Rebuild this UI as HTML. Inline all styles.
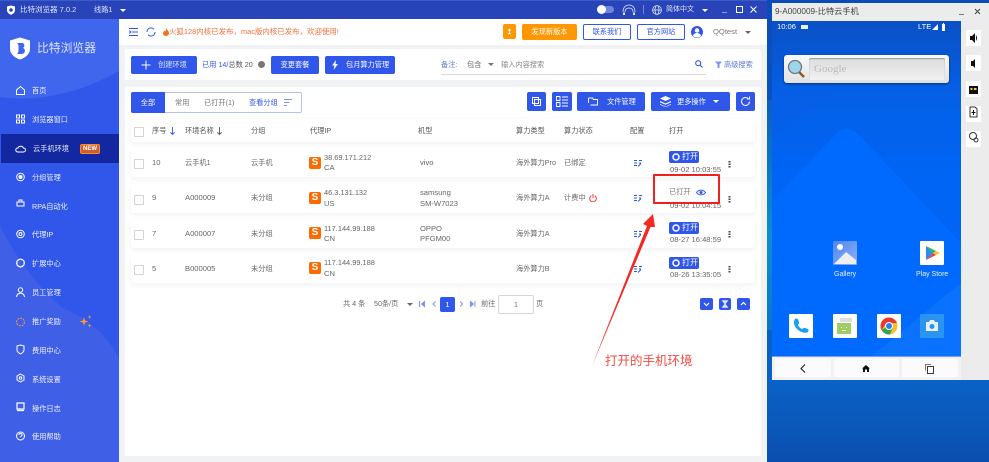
<!DOCTYPE html>
<html lang="zh-CN"><head><meta charset="utf-8"><title>比特浏览器</title>
<style>
html,body{margin:0;padding:0;width:989px;height:462px;overflow:hidden;background:#0a56b8}
body{font-family:"Liberation Sans","Noto Sans CJK SC",sans-serif;font-size:7.2px;color:#666;position:relative}
#r{position:absolute;left:0;top:0;width:989px;height:462px;overflow:hidden;filter:blur(.3px)}
#r div,#r span,#r svg{position:absolute}
.t{white-space:nowrap;line-height:10px;height:10px}
.l{font-size:7.6px}
.m{color:#fff;left:32px;opacity:.92}
.b{background:#3056ea;border-radius:2px;color:#fff;text-align:center;line-height:18px}
.o{background:#fff;border:1px solid #3056ea;border-radius:2px;color:#3056ea;text-align:center;line-height:14px;box-sizing:border-box}
.h{color:#555;top:126px}
.row{left:131px;width:624px;background:#fff;box-shadow:0 2px 5px rgba(40,50,90,.07);border-radius:3px}
.cb{left:134px;width:8px;height:8px;border:1px solid #d4d4d4;background:#fff;border-radius:1px}
.s{left:309px;width:12px;height:12px;background:#ff6a00;border-radius:2px;color:#fff;font-weight:bold;font-size:10px;line-height:12px;text-align:center}
.op{left:669px;width:30px;height:12px;background:#3056ea;border-radius:2px;color:#fff;line-height:12px}
.side{left:966px;width:15px;height:16px;background:#fff;border-radius:1px}
.app{width:24px;height:24px;background:#fff;border-radius:1px}
.nb{background:#fbfbfb;border-radius:2px;top:359px;height:18px}
</style></head><body><div id="r">

<!-- desktop strip -->
<div style="left:767px;top:0;width:222px;height:462px;background:linear-gradient(180deg,#0b4cb8 0,#0a62c6 380px,#0a4fb0 462px)"></div>
<div style="left:767px;top:100px;width:5px;height:230px;background:linear-gradient(180deg,#0b60c0,#0d8ed0 60%,#0d74c8)"></div>

<!-- title bar -->
<div style="left:0;top:0;width:767px;height:19px;background:#2844b8"></div>
<div style="left:0;top:0;width:767px;height:1px;background:#3a5cc8"></div>
<svg style="left:6px;top:5px" width="10" height="10" viewBox="0 0 10 10"><path d="M1 1.500 5 .5 9 1.500V5.500C9 7.500 7 9 5 9.800 3 9 1 7.500 1 5.500Z" fill="#fff"/><circle cx="5" cy="5" r="1.800" fill="#2844b8"/></svg>
<span class="t" style="left:20px;top:5px;color:#dfe5fa;font-size:7.500px">比特浏览器 7.0.2</span>
<span class="t" style="left:94px;top:5px;color:#dfe5fa">线路1</span>
<div style="left:120px;top:9px;border:3px solid transparent;border-top:3px solid #fff;width:0;height:0"></div>
<div style="left:597px;top:6px;width:17px;height:7px;background:#6f86dc;border-radius:4px"></div>
<div style="left:597px;top:5px;width:9px;height:9px;background:#fff;border-radius:50%"></div>
<svg style="left:622px;top:4px" width="14" height="12" viewBox="0 0 14 12"><path d="M1 8C1 3 4 1 7 1s6 2 6 7M3 8c0-3 2-4 4-4s4 1 4 4" fill="none" stroke="#dfe5fa" stroke-width=".8"/><path d="M1 8.500h2V11H1zM11 8.500h2V11h-2z" fill="#dfe5fa"/></svg>
<div style="left:643px;top:5px;width:1px;height:9px;background:#6f86dc"></div>
<svg style="left:652px;top:5px" width="10" height="10" viewBox="0 0 10 10" fill="none" stroke="#dfe5fa" stroke-width=".8"><circle cx="5" cy="5" r="4.400"/><ellipse cx="5" cy="5" rx="2" ry="4.400"/><path d="M.6 5h8.800"/></svg>
<span class="t" style="left:666px;top:5px;color:#dfe5fa;font-size:7px">简体中文</span>
<div style="left:702px;top:9px;border:3px solid transparent;border-top:3px solid #fff;width:0;height:0"></div>
<div style="left:722px;top:12px;width:5px;height:1px;background:#8ea0e4"></div>
<div style="left:736px;top:6px;width:5px;height:5px;border:1px solid #fff;box-sizing:content-box"></div>
<svg style="left:750px;top:6px" width="7" height="7" viewBox="0 0 7 7"><path d="M.5.5l6 6M6.500.5l-6 6" stroke="#fff" stroke-width="1"/></svg>

<!-- sidebar -->
<svg style="left:0;top:19px" width="119" height="443" viewBox="0 0 119 443"><rect width="119" height="443" fill="#3056ea"/><path d="M0 0H119V52C85 72 40 84 0 78Z" fill="#3f66ec"/><path d="M0 207C20 245 40 270 63 289 90 300 110 320 119 339V443H0Z" fill="#3e5fe6"/></svg>
<svg style="left:9px;top:37px" width="22" height="23" viewBox="0 0 22 23"><path d="M1 3.500 11 .5l10 3V12c0 5-5 9-10 10.500C6 21 1 17 1 12Z" fill="#fff"/><path d="M8 6h5c3 0 3 4 1 5 3 1 2.500 6-1.500 6H8c1-1 1.500-2 1.500-3V9C9.500 8 9 7 8 6Z" fill="#3f66ec"/></svg>
<span class="t" style="left:37px;top:42px;color:#dbe3fb;font-size:11.800px;line-height:13px;height:13px">比特浏览器</span>

<div style="left:1px;top:134px;width:118px;height:29px;background:#1327a0"></div>
<span class="t m" style="top:86px">首页</span>
<span class="t m" style="top:115px">浏览器窗口</span>
<span class="t m" style="top:144px;left:33px">云手机环境</span>
<div style="left:80px;top:144px;width:18px;height:8px;border:1px solid #ff8a1e;border-radius:2px;background:#c8613a;color:#fff;font-size:6px;line-height:8px;text-align:center;font-weight:bold">NEW</div>
<span class="t m" style="top:173px">分组管理</span>
<span class="t m" style="top:202px">RPA自动化</span>
<span class="t m" style="top:230px">代理IP</span>
<span class="t m" style="top:259px">扩展中心</span>
<span class="t m" style="top:288px">员工管理</span>
<span class="t m" style="top:317px">推广奖励</span>
<span class="t m" style="top:346px">费用中心</span>
<span class="t m" style="top:375px">系统设置</span>
<span class="t m" style="top:404px">操作日志</span>
<span class="t m" style="top:432px">使用帮助</span>
<svg style="left:15px;top:85px" width="11" height="360" viewBox="0 0 11 360" fill="none" stroke="#fff" stroke-width="1">
<path d="M1.500 5 5.500 1.500 9.500 5V9.500H1.500Z"/>
<path d="M1.500 30h3v3h-3zM6.500 30h3v3h-3zM1.500 35h3v3h-3zM6.500 35h3v3h-3z"/>
<path d="M2.500 67a2 2 0 0 1 .5-4 3 3 0 0 1 5.500 0 2 2 0 0 1 0 4Z"/>
<circle cx="5.500" cy="92" r="3.800"/><circle cx="5.500" cy="92" r="1.500" fill="#fff"/>
<path d="M2 117h7v4H2zM4 117v-2h3v2"/>
<circle cx="5.500" cy="149" r="3.800"/><circle cx="5.500" cy="149" r="1.500"/>
<path d="M5.500 174l3.500 2v4l-3.500 2-3.500-2v-4Z"/><circle cx="5.500" cy="178" r="3.900"/>
<circle cx="5.500" cy="205" r="2.200"/><path d="M1.500 212c0-5 8-5 8 0"/>
<circle cx="5.500" cy="237" r="3.900" stroke="#ff9a3c" stroke-dasharray="2 1"/>
<path d="M2 261l3.500-1 3.500 1v4c0 2-2 3-3.500 4-1.500-1-3.500-2-3.500-4Z"/>
<path d="M5.500 289l3.500 2v4l-3.500 2-3.500-2v-4Z"/><circle cx="5.500" cy="293" r="1.300"/>
<path d="M2 318h7v6H2zM2 325.500h7" stroke-width="1.200"/>
<circle cx="5.500" cy="351" r="4"/><path d="M4 350c0-2 3-2 3 0 0 1-1.500 1-1.500 2.300"/>
</svg>
<svg style="left:79px;top:315px" width="13" height="13" viewBox="0 0 13 13" fill="#ff9a2c"><path d="M5 2 6 5.500 9.500 6.500 6 7.500 5 11 4 7.500 .5 6.500 4 5.500Z"/><path d="M10.500 0l.5 1.500 1.500.5-1.500.5-.5 1.500-.5-1.500L8.500 2 10 1.500ZM10.500 8.500l.5 1.500 1.500.5-1.500.5-.5 1.500-.5-1.500-1.500-.5 1.500-.5Z"/></svg>

<!-- content bg -->
<div style="left:119px;top:19px;width:648px;height:443px;background:#f1f2f4"></div>
<div style="left:119px;top:19px;width:648px;height:26px;background:#fff"></div>
<svg style="left:129px;top:27px" width="10" height="10" viewBox="0 0 10 10" stroke="#3056ea" stroke-width="1" fill="none"><path d="M0 1.500h9M3 5h6M0 8.500h9M0 3.500 2 5 0 6.500"/></svg>
<svg style="left:146px;top:27px" width="10" height="10" viewBox="0 0 10 10" stroke="#3056ea" stroke-width="1" fill="none"><path d="M1 5a4 4 0 0 1 7-2.700M9 5a4 4 0 0 1-7 2.700"/></svg>
<svg style="left:163px;top:28px" width="6" height="8" viewBox="0 0 6 8"><path d="M3 0C4 2 6 3 6 5.300 6 7 4.500 8 3 8S0 7 0 5.300C0 4 1 3.500 1.300 2.500 2 3 2.300 3.300 2.500 3.500 3 2.500 3 1 3 0Z" fill="#f07020"/></svg>
<span class="t" style="left:169px;top:27px;color:#f0703a;font-size:7.450px">火狐128内核已发布，mac版内核已发布，欢迎使用!</span>
<div style="left:503px;top:24px;width:13px;height:15px;background:#ff9800;border-radius:2px;color:#fff;text-align:center;line-height:15px;font-weight:bold">↥</div>
<div style="left:522px;top:24px;width:55px;height:16px;background:#ff9800;border-radius:2px;color:#fff;text-align:center;line-height:16px">发现新版本</div>
<div class="o" style="left:583px;top:24px;width:48px;height:16px">联系我们</div>
<div class="o" style="left:637px;top:24px;width:48px;height:16px">官方网站</div>
<svg style="left:691px;top:26px" width="12" height="12" viewBox="0 0 12 12"><circle cx="6" cy="6" r="6" fill="#3056ea"/><circle cx="6" cy="4.500" r="2.200" fill="#fff"/><path d="M2 10c.5-4 7.500-4 8 0-2 2-6 2-8 0Z" fill="#fff"/></svg>
<span class="t l" style="left:713px;top:27px;color:#777">QQtest</span>
<div style="left:745px;top:31px;border:3px solid transparent;border-top:3px solid #666;width:0;height:0"></div>

<!-- toolbar card -->
<div style="left:125px;top:49px;width:636px;height:31px;background:#fff;border-radius:2px"></div>
<div class="b" style="left:131px;top:56px;width:66px;height:18px"><span class="t" style="left:27px;top:4px;color:#dfe5fa">创建环境</span></div>
<svg style="left:141px;top:60px" width="10" height="10" viewBox="0 0 10 10"><path d="M5 .5v9M.5 5h9" stroke="#fff" stroke-width="1"/></svg>
<span class="t" style="left:202px;top:60px;color:#3056ea">已用 14/<span style="position:static;color:#556">总数 20</span></span>
<div style="left:258px;top:61px;width:7px;height:7px;background:#777;border-radius:50%"></div>
<div class="b" style="left:271px;top:56px;width:48px;height:18px">变更套餐</div>
<div class="b" style="left:325px;top:56px;width:70px;height:18px"><span class="t" style="left:21px;top:4px;color:#fff">包月算力管理</span></div>
<svg style="left:332px;top:60px" width="6" height="10" viewBox="0 0 6 10"><path d="M4 0 0 5.500H2.500L1.500 10 6 4H3.500Z" fill="#fff"/></svg>
<span class="t" style="left:441px;top:60px;color:#5a78d8">备注:</span>
<span class="t" style="left:467px;top:60px">包含</span>
<div style="left:488px;top:63px;border:3px solid transparent;border-top:3px solid #777;width:0;height:0"></div>
<span class="t" style="left:501px;top:60px;color:#888">输入内容搜索</span>
<svg style="left:695px;top:60px" width="8" height="8" viewBox="0 0 8 8" fill="none" stroke="#3056ea" stroke-width="1.100"><circle cx="3.200" cy="3.200" r="2.500"/><path d="M5 5l2.500 2.500"/></svg>
<div style="left:441px;top:74px;width:265px;height:1px;background:#d8d8d8"></div>
<svg style="left:715px;top:61px" width="7" height="7" viewBox="0 0 7 7"><path d="M0 .5h7L4.500 3.500V7H2.500V3.500Z" fill="#7f96ee"/></svg>
<span class="t" style="left:724px;top:60px;color:#5a78d8">高级搜索</span>

<!-- table card -->
<div style="left:125px;top:87px;width:636px;height:369px;background:#fff;border-radius:2px"></div>
<div style="left:131px;top:92px;width:171px;height:21px;border:1px solid #b4c2f4;border-radius:2px;box-sizing:border-box"></div>
<div style="left:131px;top:92px;width:34px;height:21px;background:#3056ea;border-radius:2px 0 0 2px;color:#fff;text-align:center;line-height:21px">全部</div>
<span class="t" style="left:175px;top:98px;color:#777">常用</span>
<span class="t" style="left:204px;top:98px;color:#777">已打开(1)</span>
<span class="t" style="left:249px;top:98px;color:#3056ea">查看分组</span>
<svg style="left:284px;top:99px" width="8" height="7" viewBox="0 0 8 7" stroke="#7f96ee" stroke-width="1"><path d="M0 .5h8M0 3.500h5.500M0 6.500h3"/></svg>

<div class="b" style="left:527px;top:92px;width:19px;height:19px"></div>
<svg style="left:531px;top:97px" width="11" height="9" viewBox="0 0 11 9" fill="none" stroke="#fff"><path d="M1.500.5h6v6h-6zM3.500 2.500h6v6h-6z"/></svg>
<div class="b" style="left:552px;top:92px;width:20px;height:19px"></div>
<svg style="left:556px;top:96px" width="12" height="11" viewBox="0 0 12 11" fill="none" stroke="#fff" stroke-width=".9"><path d="M.5.500h3.500v4H.5zM.5 6.500h3.500v4H.5zM6 1h6M6 4h6M6 7h6M6 10h6"/></svg>
<div class="b" style="left:577px;top:92px;width:68px;height:19px"><span class="t" style="left:30px;top:5px;color:#fff">文件管理</span></div>
<svg style="left:588px;top:97px" width="10" height="9" viewBox="0 0 10 9" fill="none" stroke="#fff" stroke-width=".9"><path d="M.5 1h4l1 1.500h4V8H2.500"/><path d="M.5 1v5"/></svg>
<div class="b" style="left:651px;top:92px;width:79px;height:19px"><span class="t" style="left:26px;top:5px;color:#fff">更多操作</span></div>
<svg style="left:660px;top:96px" width="11" height="11" viewBox="0 0 11 11" fill="#fff"><path d="M5.500 0 11 2.500 5.500 5 0 2.500ZM0 5l5.500 2.500L11 5v1.300L5.500 8.800 0 6.300ZM0 8l5.500 2.500L11 8v.800L5.500 11 0 8.800Z"/></svg>
<div style="left:713px;top:100px;border:3px solid transparent;border-top:3px solid #fff;width:0;height:0"></div>
<div class="b" style="left:736px;top:92px;width:19px;height:19px"></div>
<svg style="left:740px;top:96px" width="11" height="11" viewBox="0 0 11 11" fill="none" stroke="#fff" stroke-width="1"><path d="M9.500 5.500a4 4 0 1 1-1.200-2.900"/><path d="M9.500 .5v2.500H7"/></svg>

<!-- table head -->
<div class="row" style="top:119px;height:23px"></div>
<div class="cb" style="top:127px"></div>
<span class="t h" style="left:152px">序号</span>
<svg style="left:170px;top:127px" width="5" height="8" viewBox="0 0 5 8" fill="none" stroke="#3056ea" stroke-width=".9"><path d="M2.500 0v7.500M.3 5.300l2.200 2.200 2.200-2.200"/></svg>
<span class="t h" style="left:185px">环境名称</span>
<svg style="left:217px;top:127px" width="5" height="8" viewBox="0 0 5 8" fill="none" stroke="#555" stroke-width=".9"><path d="M2.500 0v7.500M.3 5.300l2.200 2.200 2.200-2.200"/></svg>
<span class="t h" style="left:251px">分组</span>
<span class="t h" style="left:310px">代理IP</span>
<span class="t h" style="left:418px">机型</span>
<span class="t h" style="left:516px">算力类型</span>
<span class="t h" style="left:564px">算力状态</span>
<span class="t h" style="left:630px">配置</span>
<span class="t h" style="left:669px">打开</span>

<!-- rows -->
<div class="row" style="top:148px;height:29px"></div>
<div class="row" style="top:184px;height:29px"></div>
<div class="row" style="top:220px;height:28px"></div>
<div class="row" style="top:255px;height:28px"></div>

<div class="cb" style="top:159px"></div><span class="t l" style="left:152px;top:158px">10</span><span class="t" style="left:185px;top:158px">云手机1</span><span class="t" style="left:251px;top:158px">云手机</span>
<div class="s" style="top:157px">S</div><span class="t l" style="left:324px;top:153px;font-size:7.400px">38.69.171.212</span><span class="t l" style="left:324px;top:163px">CA</span>
<span class="t l" style="left:420px;top:158px">vivo</span><span class="t" style="left:516px;top:158px">海外算力Pro</span><span class="t" style="left:564px;top:158px">已绑定</span>

<div class="cb" style="top:195px"></div><span class="t l" style="left:152px;top:193px">9</span><span class="t l" style="left:185px;top:193px">A000009</span><span class="t" style="left:251px;top:193px">未分组</span>
<div class="s" style="top:192px">S</div><span class="t l" style="left:324px;top:188px;font-size:7.400px">46.3.131.132</span><span class="t l" style="left:324px;top:199px">US</span>
<span class="t l" style="left:420px;top:188px">samsung</span><span class="t l" style="left:420px;top:199px">SM-W7023</span><span class="t" style="left:516px;top:193px">海外算力A</span><span class="t" style="left:564px;top:193px">计费中</span>
<svg style="left:589px;top:194px" width="8" height="8" viewBox="0 0 8 8" fill="none" stroke="#f04040" stroke-width="1"><path d="M2.300 1.700a3.300 3.300 0 1 0 3.400 0M4 0v4"/></svg>

<div class="cb" style="top:230px"></div><span class="t l" style="left:152px;top:229px">7</span><span class="t l" style="left:185px;top:229px">A000007</span><span class="t" style="left:251px;top:229px">未分组</span>
<div class="s" style="top:227px">S</div><span class="t l" style="left:324px;top:224px;font-size:7.400px">117.144.99.188</span><span class="t l" style="left:324px;top:234px">CN</span>
<span class="t l" style="left:420px;top:224px">OPPO</span><span class="t l" style="left:420px;top:234px">PFGM00</span><span class="t" style="left:516px;top:229px">海外算力A</span>

<div class="cb" style="top:265px"></div><span class="t l" style="left:152px;top:264px">5</span><span class="t l" style="left:185px;top:264px">B000005</span><span class="t" style="left:251px;top:264px">未分组</span>
<div class="s" style="top:262px">S</div><span class="t l" style="left:324px;top:258px;font-size:7.400px">117.144.99.188</span><span class="t l" style="left:324px;top:269px">CN</span>
<span class="t" style="left:516px;top:264px">海外算力B</span>

<!-- config icons -->
<svg style="left:634px;top:160px" width="8" height="115" viewBox="0 0 8 115" stroke="#3056ea" stroke-width="1" fill="none"><path d="M0 .5h3M0 3h3M0 5.500h3M5 .5h3M5 3h2M4 6.500l3-3"/><path transform="translate(0,35)" d="M0 .5h3M0 3h3M0 5.500h3M5 .5h3M5 3h2M4 6.500l3-3"/><path transform="translate(0,71)" d="M0 .5h3M0 3h3M0 5.500h3M5 .5h3M5 3h2M4 6.500l3-3"/><path transform="translate(0,106)" d="M0 .5h3M0 3h3M0 5.500h3M5 .5h3M5 3h2M4 6.500l3-3"/></svg>

<!-- open -->
<div class="op" style="top:151px"><span class="t" style="left:13px;top:1px;color:#fff;font-size:8px">打开</span></div>
<div class="op" style="top:222px"><span class="t" style="left:13px;top:1px;color:#fff;font-size:8px">打开</span></div>
<div class="op" style="top:257px"><span class="t" style="left:13px;top:1px;color:#fff;font-size:8px">打开</span></div>
<svg style="left:672px;top:153px" width="8" height="8" viewBox="0 0 8 8"><circle cx="4" cy="4" r="3" fill="none" stroke="#fff" stroke-width="1.500"/></svg>
<svg style="left:672px;top:224px" width="8" height="8" viewBox="0 0 8 8"><circle cx="4" cy="4" r="3" fill="none" stroke="#fff" stroke-width="1.500"/></svg>
<svg style="left:672px;top:259px" width="8" height="8" viewBox="0 0 8 8"><circle cx="4" cy="4" r="3" fill="none" stroke="#fff" stroke-width="1.500"/></svg>
<span class="t l" style="left:670px;top:165px">09-02 10:03:55</span>
<span class="t l" style="left:670px;top:201px">09-02 10:04:15</span>
<span class="t l" style="left:670px;top:235px">08-27 16:48:59</span>
<span class="t l" style="left:670px;top:270px">08-26 13:35:05</span>
<span class="t" style="left:669px;top:187px;color:#777">已打开</span>
<svg style="left:696px;top:189px" width="10" height="7" viewBox="0 0 10 7"><path d="M.5 3.500C3 .3 7 .3 9.500 3.500 7 6.700 3 6.700.5 3.500Z" fill="none" stroke="#3056ea"/><circle cx="5" cy="3.500" r="1.500" fill="#3056ea"/></svg>
<svg style="left:728px;top:161px" width="3" height="118" viewBox="0 0 3 118" fill="#444"><path d="M.5 0h2v1.500h-2zM.5 2.500h2V4h-2zM.5 5h2v1.500h-2zM.5 35h2v1.500h-2zM.5 37.500h2V39h-2zM.5 40h2v1.500h-2zM.5 70h2v1.500h-2zM.5 72.500h2V74h-2zM.5 75h2v1.500h-2zM.5 105h2v1.500h-2zM.5 107.500h2V109h-2zM.5 110h2v1.500h-2z"/></svg>

<!-- pagination -->
<span class="t" style="left:343px;top:299px">共 4 条</span>
<span class="t" style="left:374px;top:299px">50条/页</span>
<div style="left:407px;top:303px;border:3px solid transparent;border-top:3px solid #666;width:0;height:0"></div>
<svg style="left:419px;top:300px" width="60" height="8" viewBox="0 0 60 8" fill="none" stroke="#7f96ee" stroke-width="1"><path d="M.5 1v6M5.500 1.500 2.500 4l3 2.500Z" fill="#7f96ee"/><path d="M16.500 1.500 14 4 16.500 6.500"/><path d="M41 1.500 43.500 4 41 6.500"/><path d="M51.500 1.500 54.500 4l-3 2.500ZM56 1v6" fill="#7f96ee"/></svg>
<div class="b" style="left:440px;top:297px;width:15px;height:15px;line-height:15px;font-size:7.600px">1</div>
<span class="t" style="left:481px;top:299px">前往</span>
<div style="left:498px;top:295px;width:36px;height:19px;border:1px solid #d6d6d6;border-radius:2px;box-sizing:border-box;text-align:center;line-height:17px;color:#777;font-size:7.600px">1</div>
<span class="t" style="left:536px;top:299px">页</span>
<div class="b" style="left:700px;top:298px;width:13px;height:12px"></div>
<div class="b" style="left:719px;top:298px;width:12px;height:12px"></div>
<div class="b" style="left:737px;top:298px;width:13px;height:12px"></div>
<svg style="left:700px;top:298px" width="50" height="12" viewBox="0 0 50 12" fill="none" stroke="#fff" stroke-width="1.200"><path d="M4 5l2.500 2.500L9 5"/><path d="M23 3h4l-2 2.500ZM23 9h4l-2-2.500Z"/><path d="M41 7l2.500-2.500L46 7"/></svg>

<!-- annotations -->
<div style="left:653px;top:174px;width:67px;height:30px;border:2px solid #f02020;box-sizing:border-box;border-radius:1px"></div>
<svg style="left:585px;top:205px" width="80" height="170" viewBox="0 0 80 170"><path d="M7 161 62 21 58 19 68 9 70 22 65.500 22Z" fill="#f42a22"/></svg>
<span class="t" style="left:605px;top:354px;color:#f44a40;font-size:12.500px;line-height:15px;height:15px">打开的手机环境</span>

<!-- phone window -->
<div style="left:772px;top:3px;width:217px;height:377px;background:#ececec"></div>
<span class="t" style="left:775px;top:6px;color:#444;font-size:8.200px;line-height:11px;height:11px">9-A000009-比特云手机</span>
<div style="left:959px;top:14px;width:5px;height:1px;background:#777"></div>
<svg style="left:974px;top:8px" width="7" height="7" viewBox="0 0 7 7"><path d="M1 1l5 5M6 1 1 6" stroke="#444" stroke-width="1"/></svg>
<svg style="left:772px;top:21px" width="189" height="335" viewBox="0 0 189 335">
<defs><linearGradient id="w" x1="0" y1="0" x2="0" y2="1"><stop offset="0" stop-color="#0a50c6"/><stop offset=".22" stop-color="#0560e6"/><stop offset=".45" stop-color="#0064f4"/><stop offset="1" stop-color="#0064f4"/></linearGradient></defs>
<rect width="189" height="335" fill="url(#w)"/>
<path d="M0 119 56 72 0 72Z" fill="#0a5ae0" opacity=".25"/>
<path d="M0 180 65 112q10-8 20 0L189 222V335H0Z" fill="#006aff"/>
<path d="M100 335 189 262V335Z" fill="#0a72ff"/>
</svg>
<span class="t l" style="left:777px;top:22px;color:#fff">10:06</span>
<div style="left:801px;top:25px;width:7px;height:4px;background:#e8f0ff"></div>
<span class="t l" style="left:918px;top:22px;color:#fff">LTE</span>
<svg style="left:932px;top:23px" width="16" height="8" viewBox="0 0 16 8" fill="#fff"><path d="M0 7 6 1v6ZM10 1h1V0h1v1h1v7h-3Z"/></svg>
<!-- search widget -->
<div style="left:784px;top:55px;width:165px;height:28px;background:linear-gradient(180deg,#fafafa,#e2e2e2);border-radius:3px;box-shadow:0 1px 2px rgba(0,20,60,.6)"></div>
<div style="left:809px;top:58px;width:136px;height:22px;background:linear-gradient(180deg,#dcdcdc,#f2f2f2);border-radius:2px;box-shadow:inset 0 1px 1px #999"></div>
<span class="t" style="left:814px;top:62px;color:#bbb;font-family:'Liberation Serif',serif;font-size:11px;line-height:14px;height:14px">Google</span>
<svg style="left:787px;top:59px" width="19" height="20" viewBox="0 0 19 20"><path d="M12 13l5 5" stroke="#8a5a30" stroke-width="2.500"/><circle cx="8" cy="8" r="6.500" fill="#9fd4ee" stroke="#777" stroke-width="1.300"/></svg>

<!-- apps -->
<div class="app" style="left:833px;top:241px;background:linear-gradient(135deg,#4e86f4,#8ab0f8)"></div>
<svg style="left:833px;top:241px" width="24" height="24" viewBox="0 0 24 24"><circle cx="7" cy="6" r="3" fill="#fff"/><path d="M1 23 13 11 23 19V23Z" fill="#eee"/></svg>
<div class="app" style="left:920px;top:241px"></div>
<svg style="left:920px;top:241px" width="24" height="24" viewBox="0 0 24 24"><path d="M6 5 13 12 6 19Z" fill="#2a8cf0"/><path d="M6 5 16 10 13 12Z" fill="#2fb45a"/><path d="M6 19 16 14 13 12Z" fill="#e8403a"/><path d="M16 10 20 12 16 14 13 12Z" fill="#fbc02d"/></svg>
<span class="t" style="left:834px;top:270px;color:#e8f0ff;font-size:7px">Gallery</span>
<span class="t" style="left:916px;top:270px;color:#e8f0ff;font-size:7px">Play Store</span>
<div class="app" style="left:789px;top:314px"></div>
<svg style="left:789px;top:314px" width="24" height="24" viewBox="0 0 24 24"><path d="M6 5c3-2 4 2 4 4 0 1-1 1-1 2 1 2 2 3 4 4 1 0 1-1 2-1 2 0 6 1 4 4-3 2-8 0-11-3-3-3-4-7-2-10Z" fill="#18a0f0"/></svg>
<div class="app" style="left:833px;top:314px"></div>
<svg style="left:833px;top:314px" width="24" height="24" viewBox="0 0 24 24"><path d="M7 4h12v4H7Z" fill="#ddd"/><path d="M4 9h14v11H4Z" fill="#a0cc64"/><path d="M8 13h1v1H8zM13 13h1v1h-1zM9 16h4v1H9z" fill="#fff"/></svg>
<div class="app" style="left:877px;top:314px"></div>
<svg style="left:877px;top:314px" width="24" height="24" viewBox="0 0 24 24"><circle cx="12" cy="12" r="8.500" fill="#fbc02d"/><path d="M12 3.500A8.500 8.500 0 0 0 4.600 16.200L9 9.500 20 9A8.500 8.500 0 0 0 12 3.500Z" fill="#e33b2e"/><path d="M4.600 16.200A8.500 8.500 0 0 0 13 20.500L16 13 9 13Z" fill="#2fa84f"/><circle cx="12" cy="12" r="4" fill="#fff"/><circle cx="12" cy="12" r="3" fill="#2a7ff0"/></svg>
<div class="app" style="left:920px;top:314px;background:#2a94f0"></div>
<svg style="left:920px;top:314px" width="24" height="24" viewBox="0 0 24 24"><path d="M6 8h3l1-2h4l1 2h3v9H6Z" fill="#e8f2fc"/><circle cx="12" cy="12.500" r="2.500" fill="#2a94f0"/></svg>

<!-- nav -->
<div style="left:772px;top:356px;width:189px;height:24px;background:#f2f2f2"></div>
<div style="left:772px;top:356px;width:189px;height:1px;background:#6ea2f8"></div>
<div class="nb" style="left:775px;width:56px"></div>
<div class="nb" style="left:834px;width:65px"></div>
<div class="nb" style="left:902px;width:56px"></div>
<svg style="left:800px;top:364px" width="6" height="9" viewBox="0 0 6 9"><path d="M5 .5 1 4.500l4 4" fill="none" stroke="#111" stroke-width="1"/></svg>
<svg style="left:862px;top:365px" width="8" height="7" viewBox="0 0 8 7"><path d="M4 0 8 3.500H7V7H5V4.500H3V7H1V3.500H0Z" fill="#111"/></svg>
<svg style="left:925px;top:364px" width="9" height="10" viewBox="0 0 9 10" fill="none"><path d="M.5 6.500V.5H6" stroke="#a06a50"/><rect x="2.500" y="2.500" width="6" height="7" stroke="#3a3a3a" fill="#fff"/></svg>

<!-- side -->
<div class="side" style="top:30px"></div>
<div class="side" style="top:55px"></div>
<div class="side" style="top:81px"></div>
<div class="side" style="top:106px"></div>
<div class="side" style="top:131px"></div>
<svg style="left:966px;top:30px" width="15" height="117" viewBox="0 0 15 117" fill="#111"><path d="M4 6h2l3-3v10L6 10H4ZM10 5q2 3 0 6"/><path d="M5 31h2l2-2v9l-2-2H5Z"/><rect x="3" y="56" width="9" height="8"/><path d="M4.500 58h2v2h-2zM8 58h2.500v2H8z" fill="#e8d040"/><path d="M4 77h5l2 2v8H4Z" fill="none" stroke="#333"/><path d="M7.500 80v5M5.500 82.500h4" stroke="#111"/><circle cx="7" cy="106" r="3.500" fill="none" stroke="#333"/><circle cx="10" cy="110" r="2" fill="none" stroke="#333"/></svg>
</div></body></html>
